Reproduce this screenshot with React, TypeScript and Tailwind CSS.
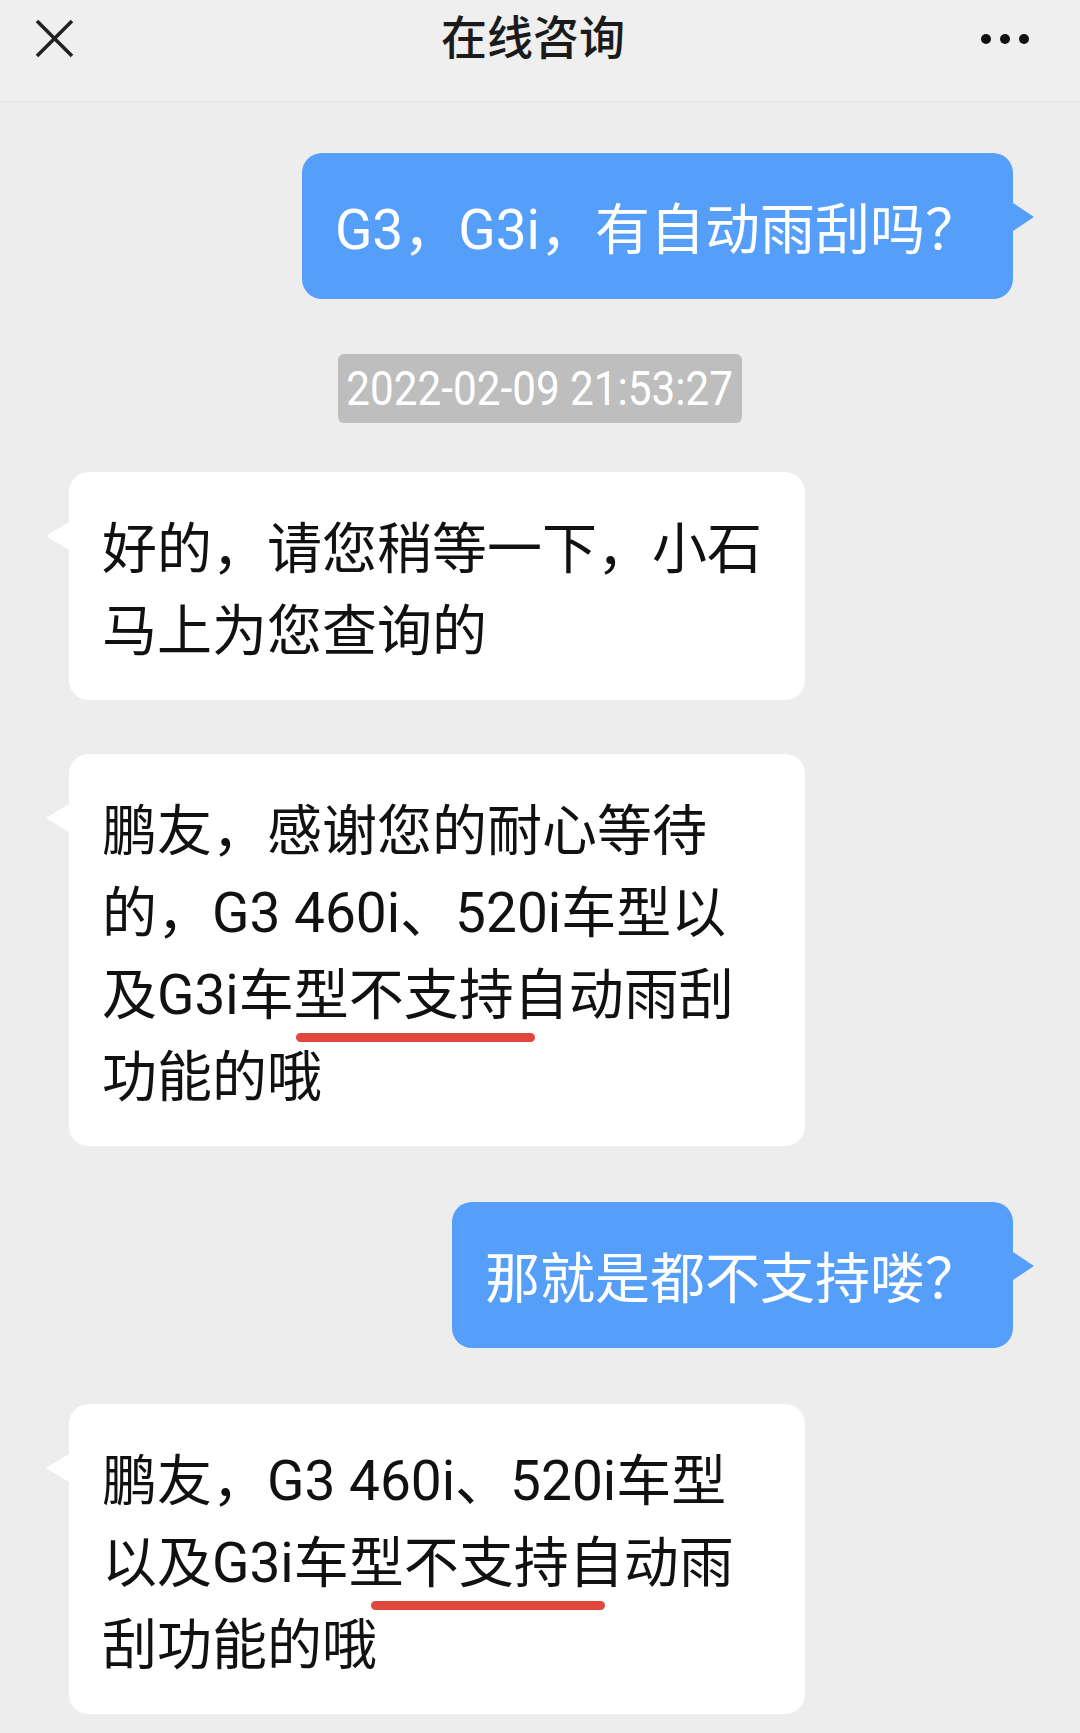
import React from 'react';

const FONT = "font-['Roboto','Noto_Sans_CJK_SC',sans-serif]";

type BubbleProps = { children: React.ReactNode; className?: string };

const LeftBubble: React.FC<BubbleProps> = ({ children, className = '' }) => (
  <div
    className={`relative ml-[69px] w-[736px] rounded-[20px] bg-white px-[33px] pb-[28px] pt-[36px] text-[55px] leading-[82px] text-[#111] ${className}`}
  >
    <span className="absolute left-[-23px] top-[50px] h-0 w-0 border-y-[14px] border-r-[23px] border-y-transparent border-r-white" />
    {children}
  </div>
);

const RightBubble: React.FC<BubbleProps> = ({ children, className = '' }) => (
  <div
    className={`relative ml-auto mr-[67px] max-w-[736px] rounded-[20px] bg-[#559ffb] px-[33px] pb-[28px] pt-[36px] text-[55px] leading-[82px] text-white ${className}`}
  >
    <span className="absolute right-[-21px] top-[50px] h-0 w-0 border-y-[14px] border-l-[21px] border-y-transparent border-l-[#559ffb]" />
    {children}
  </div>
);

// hand-drawn red marker under a phrase
const Mark: React.FC<BubbleProps> = ({ children, className = '' }) => (
  <span className="relative">
    {children}
    <span className={`absolute bottom-[-15px] h-[9px] rounded-full bg-[#e1473c] ${className}`} />
  </span>
);

export default function App() {
  return (
    <div className={`min-h-[1733px] w-[1080px] bg-[#ededed] pb-[21px] ${FONT}`}>
      {/* Header */}
      <header className="grid h-[102px] grid-cols-[1fr_auto_1fr] items-center border-b border-[#e2e2e2] bg-[#efefef] pb-[24px]">
        <div className="pl-[35px]">
          <svg width="39" height="39" viewBox="0 0 39 39">
            <path d="M2 2 L37 37 M37 2 L2 37" stroke="#222" strokeWidth="3.6" />
          </svg>
        </div>
        <h1 className="mr-[14px] text-[46px] font-medium text-[#1b1b1b]">在线咨询</h1>
        <div className="flex justify-end gap-[9px] pr-[51px]">
          <span className="h-[10px] w-[10px] rounded-full bg-[#111]" />
          <span className="h-[10px] w-[10px] rounded-full bg-[#111]" />
          <span className="h-[10px] w-[10px] rounded-full bg-[#111]" />
        </div>
      </header>

      {/* Messages */}
      <div className="flex flex-col">
        <RightBubble className="mt-[51px]">G3，G3i，有自动雨刮吗？</RightBubble>

        <div className="mt-[55px] flex h-[69px] w-[404px] items-center justify-center self-center rounded-[6px] bg-[#bebebe]">
          <span className="inline-block scale-x-[0.88] whitespace-nowrap text-[48px] leading-none text-white">
            2022-02-09 21:53:27
          </span>
        </div>

        <LeftBubble className="mt-[49px]">
          好的，请您稍等一下，小石
          <br />
          马上为您查询的
        </LeftBubble>

        <LeftBubble className="mt-[54px]">
          鹏友，感谢您的耐心等待
          <br />
          的，G3 460i、520i车型以
          <br />
          及G3i车<Mark className="left-[2px] right-[-21px]">型不支持</Mark>自动雨刮
          <br />
          功能的哦
        </LeftBubble>

        <RightBubble className="mt-[56px]">那就是都不支持喽？</RightBubble>

        <LeftBubble className="mt-[56px]">
          鹏友，G3 460i、520i车型
          <br />
          以及G3i车型<Mark className="left-[-33px] right-[19px]">不支持自</Mark>动雨
          <br />
          刮功能的哦
        </LeftBubble>
      </div>
    </div>
  );
}
